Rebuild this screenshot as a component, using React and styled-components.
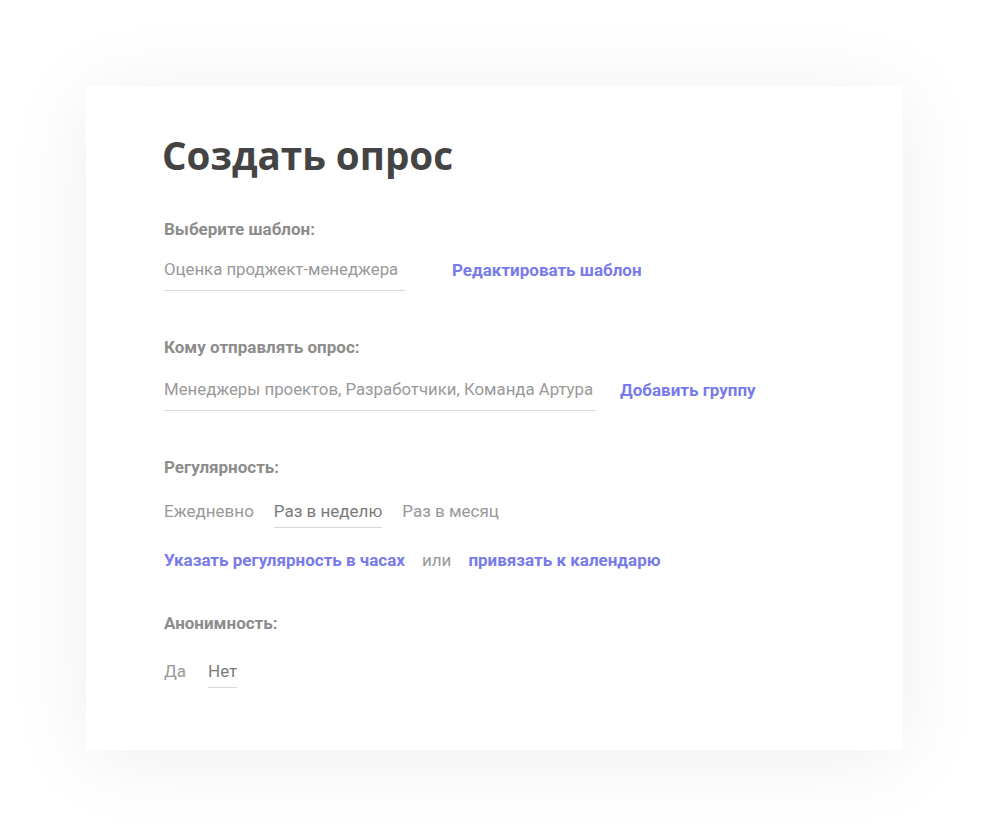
import React from 'react';
import styled, {createGlobalStyle} from 'styled-components';

const Global = createGlobalStyle`
    body {
        margin: 0;
        background: #fff;
        font-family: Roboto, "Liberation Sans", sans-serif;
    }
`;

const Page = styled.div`
    padding: 86px 0 0 86px;
    height: 836px;
    box-sizing: border-box;
`;

const Card = styled.div`
    width: 817px;
    height: 664px;
    box-sizing: border-box;
    background: #fff;
    padding: 47px 0 0 78px;
    box-shadow: 0 8px 80px rgba(0, 0, 0, 0.07);
`;

const Title = styled.h1`
    margin: 0 0 42px -2px;
    font-family: "Open Sans", "DejaVu Sans", sans-serif;
    font-weight: 700;
    font-size: 38.6px;
    line-height: 44px;
    color: #444;
`;

const Section = styled.div`
    margin-bottom: ${p => p.gap || 0}px;
`;

const Label = styled.div`
    font-size: 17px;
    font-weight: 700;
    color: #8c8c8c;
    line-height: 20px;
    margin-bottom: ${p => p.mb || 20}px;
`;

const Row = styled.div`
    display: flex;
    align-items: flex-start;
    gap: ${p => p.gap || 0}px;
    margin-top: ${p => p.mt || 0}px;
`;

const Field = styled.div`
    width: ${p => p.w}px;
    font-size: 16.8px;
    color: #999;
    line-height: 22px;
    white-space: nowrap;
    padding-bottom: 10px;
    border-bottom: 1px solid #d8d8d8;
`;

const Link = styled.a`
    font-size: 17px;
    font-weight: 700;
    color: #777be9;
    line-height: 20px;
    margin-top: 2px;
    white-space: nowrap;
    cursor: pointer;
`;

const Option = styled.div`
    font-size: 17px;
    line-height: 22px;
    color: ${p => (p.active ? '#7a7a7a' : '#999')};
    padding-bottom: 5px;
    border-bottom: 1px solid ${p => (p.active ? '#d8d8d8' : 'transparent')};
`;

const Or = styled.span`
    font-size: 17px;
    color: #999;
    line-height: 22px;
    margin-top: 1px;
`;

const App = () => (
    <Page>
        <Global />
        <Card>
            <Title>Создать опрос</Title>
            <Section gap={46}>
                <Label mb={19}>Выберите шаблон:</Label>
                <Row gap={47}>
                    <Field w={241}>Оценка проджект-менеджера</Field>
                    <Link>Редактировать шаблон</Link>
                </Row>
            </Section>
            <Section gap={46}>
                <Label mb={21}>Кому отправлять опрос:</Label>
                <Row gap={24}>
                    <Field w={432}>Менеджеры проектов, Разработчики, Команда Артура</Field>
                    <Link>Добавить группу</Link>
                </Row>
            </Section>
            <Section gap={42}>
                <Label mb={23}>Регулярность:</Label>
                <Row gap={20}>
                    <Option>Ежедневно</Option>
                    <Option active>Раз в неделю</Option>
                    <Option>Раз в месяц</Option>
                </Row>
                <Row gap={17} mt={20}>
                    <Link>Указать регулярность в часах</Link>
                    <Or>или</Or>
                    <Link>привязать к календарю</Link>
                </Row>
            </Section>
            <Section>
                <Label mb={27}>Анонимность:</Label>
                <Row gap={22}>
                    <Option>Да</Option>
                    <Option active>Нет</Option>
                </Row>
            </Section>
        </Card>
    </Page>
);

export default App;
